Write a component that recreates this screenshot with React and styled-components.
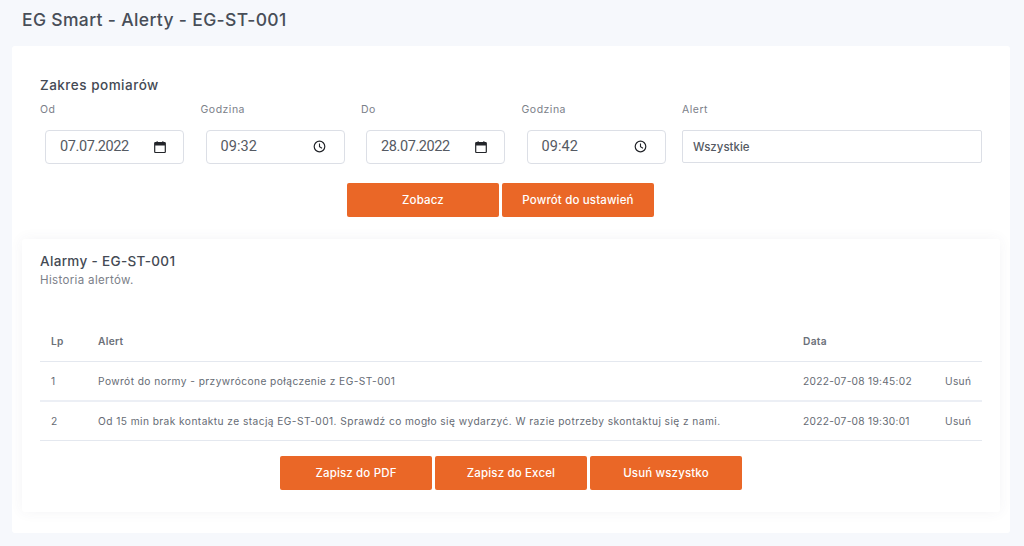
import React from "react";
import styled, { createGlobalStyle } from "styled-components";

const Global = createGlobalStyle`
  html, body { margin: 0; padding: 0; background: #f5f7fb; }
  body { font-family: "Inter", "Noto Sans", sans-serif; width: 1024px; height: 546px; overflow: hidden; }
  * { box-sizing: border-box; }
`;
const Page = styled.div`
  width: 1024px; height: 546px; padding: 0 14px 13px 12px; display: flex; flex-direction: column; background: #f6f8fc;
`;
const PageTitle = styled.h1`
  margin: 0; height: 46px; padding: 9px 0 0 10px; font-size: 17.5px; line-height: 22px; font-weight: 500; color: #484e58; letter-spacing: 0.34px;
`;
const MainCard = styled.main`
  flex: 1; background: #fff; border-radius: 3px; padding: 31px 10px 21px 10px; display: flex; flex-direction: column;
`;
const FilterSection = styled.section`
  padding: 0 18px; height: 162px;
`;
const SectionTitle = styled.h2`
  margin: 0; font-size: 13.5px; line-height: 17px; font-weight: 500; color: #444a54; letter-spacing: 0.5px;
`;
const FilterGrid = styled.div`
  display: grid; grid-template-columns: 160.5px 160.5px 160.5px 160.5px 300px; margin-top: 9px;
`;
const Field = styled.div`
  display: flex; flex-direction: column;
`;
const Label = styled.label`
  font-size: 10.5px; line-height: 14px; height: 27px; color: #7b8089; letter-spacing: 0.5px;
`;
const PickerBox = styled.div`
  margin-left: 5px; width: 139px; height: 34px; border: 1px solid #dcdfe6; border-radius: 4px; background: #fff;
  display: flex; align-items: center; justify-content: space-between; padding: 0 ${(p) => p.$endPad}px 1px 14px;
  font-family: "Roboto", sans-serif; font-size: 14.5px; color: #555a63;
  letter-spacing: ${(p) => p.$tight}px;
`;
const TextBox = styled.div`
  width: 300px; height: 33px; border: 1px solid #dcdfe6; border-radius: 2px; display: flex; align-items: center;
  padding: 0 10px; font-size: 11.5px; font-weight: 500; color: #555a63;
`;
const Buttons = styled.div`
  display: flex; justify-content: center; gap: 3px; margin-top: ${(p) => p.$top}px; margin-right: ${(p) => p.$shift || 0}px;
`;
const Button = styled.button`
  width: 152px; height: 34px; border: 0; border-radius: 2px; background: #ea6727; color: #fff;
  font-family: inherit; font-size: 11.5px; font-weight: 500; padding: 0; letter-spacing: 0.15px;
`;
const InnerCard = styled.section`
  flex: 1; background: #fff; border-radius: 3px; padding: 13px 18px 0 18px;
  box-shadow: 0 0 14px rgba(60, 70, 110, 0.06);
`;
const CardTitle = styled.h3`
  margin: 0; font-size: 13.5px; line-height: 18px; font-weight: 500; color: #444a54; letter-spacing: 0.33px;
`;
const CardSub = styled.p`
  margin: 2px 0 0; font-size: 11.5px; line-height: 16px; color: #7b8089; letter-spacing: 0.35px;
`;
const Table = styled.table`
  width: 942px; margin-top: 32px; border-collapse: collapse; table-layout: fixed;
  font-size: 10.2px; color: #666b74;
`;
const Th = styled.th`
  height: 41px; padding: 1px 0 0 ${(p) => p.$pad || 0}px; text-align: left; font-weight: 600; color: #6b7079; border-bottom: 1px solid #e4e8ef; font-size: 10.2px; letter-spacing: 0.3px;
`;
const Td = styled.td`
  height: ${(p) => (p.$thick ? 40 : 39)}px; padding: 0 0 0 ${(p) => p.$pad || 0}px; border-bottom: ${(p) => (p.$thick ? "2px solid #eceff5" : "1px solid #e4e8ef")}; white-space: nowrap;
  letter-spacing: ${(p) => p.$spacing}px;
`;
const CalendarIcon = () => (
  <svg width="12" height="12" viewBox="0 0 12 12" aria-hidden="true">
    <path d="M1.5 1.5h9a.8.8 0 0 1 .8.8v8.4a.8.8 0 0 1-.8.8h-9a.8.8 0 0 1-.8-.8V2.300a.8.8 0 0 1 .8-.8z" fill="none" stroke="#23252a" strokeWidth="1.2" />
    <rect x="1" y="1.500" width="10" height="3" fill="#23252a" />
    <rect x="2.500" y="0.300" width="1.300" height="1.500" fill="#23252a" />
    <rect x="8.200" y="0.300" width="1.300" height="1.500" fill="#23252a" />
  </svg>
);
const ClockIcon = () => (
  <svg width="13" height="13" viewBox="0 0 13 13" aria-hidden="true">
    <circle cx="6.500" cy="6.500" r="5.300" fill="none" stroke="#23252a" strokeWidth="1.200" />
    <path d="M6.500 3.400v3.300l2.500 1.500" fill="none" stroke="#23252a" strokeWidth="1.100" />
  </svg>
);
const rows = [
  ["1", "Powrót do normy - przywrócone połączenie z EG-ST-001", "2022-07-08 19:45:02", true],
  ["2", "Od 15 min brak kontaktu ze stacją EG-ST-001. Sprawdź co mogło się wydarzyć. W razie potrzeby skontaktuj się z nami.", "2022-07-08 19:30:01", false],
];
const DatePicker = ({ label, value }) => (
  <Field>
    <Label>{label}</Label>
    <PickerBox $endPad={17} $tight={-0.4}><span>{value}</span><CalendarIcon /></PickerBox>
  </Field>
);
const TimePicker = ({ label, value }) => (
  <Field>
    <Label>{label}</Label>
    <PickerBox $endPad={18} $tight={0.1}><span>{value}</span><ClockIcon /></PickerBox>
  </Field>
);
export default function App() {
  return (
    <Page>
      <Global />
      <PageTitle>EG Smart - Alerty - EG-ST-001</PageTitle>
      <MainCard>
        <FilterSection>
          <SectionTitle>Zakres pomiarów</SectionTitle>
          <FilterGrid>
            <DatePicker label="Od" value="07.07.2022" />
            <TimePicker label="Godzina" value="09:32" />
            <DatePicker label="Do" value="28.07.2022" />
            <TimePicker label="Godzina" value="09:42" />
            <Field>
              <Label>Alert</Label>
              <TextBox>Wszystkie</TextBox>
            </Field>
          </FilterGrid>
          <Buttons $top={19} $shift={21}>
            <Button>Zobacz</Button>
            <Button>Powrót do ustawień</Button>
          </Buttons>
        </FilterSection>
        <InnerCard>
          <CardTitle>Alarmy - EG-ST-001</CardTitle>
          <CardSub>Historia alertów.</CardSub>
          <Table>
            <colgroup>
              <col width="58" /><col width="705" /><col width="131" /><col width="48" />
            </colgroup>
            <thead>
              <tr><Th $pad={11}>Lp</Th><Th>Alert</Th><Th>Data</Th><Th /></tr>
            </thead>
            <tbody>
              {rows.map(([n, text, date, thick]) => (
                <tr key={n}>
                  <Td $pad={11} $thick={thick} $spacing={0.2}>{n}</Td>
                  <Td $thick={thick} $spacing={0.43}>{text}</Td>
                  <Td $thick={thick} $spacing={0.27}>{date}</Td>
                  <Td $pad={11} $thick={thick} $spacing={0.3}>Usuń</Td>
                </tr>
              ))}
            </tbody>
          </Table>
          <Buttons $top={15}>
            <Button>Zapisz do PDF</Button>
            <Button>Zapisz do Excel</Button>
            <Button>Usuń wszystko</Button>
          </Buttons>
        </InnerCard>
      </MainCard>
    </Page>
  );
}
